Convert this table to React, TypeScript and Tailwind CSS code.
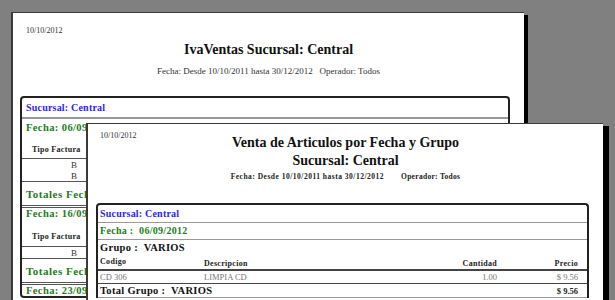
import React from 'react';

// ─── Shared styles ────────────────────────────────────────────────────────────

const serif = "font-['Liberation_Serif','Times_New_Roman',serif]";

// ─── Back page: IvaVentas ─────────────────────────────────────────────────────

const TipoFacturaHead: React.FC<{ h: string; pb: string }> = ({ h, pb }) => (
  <div className={`flex items-end ${h} ${pb} border-b border-[#555] pl-[10px]`}>
    <span className="text-[8px] leading-[10px] font-bold tracking-[0.3px] text-[#222]">Tipo Factura</span>
  </div>
);

const BRow: React.FC<{ last?: boolean }> = ({ last }) => (
  <div className={`flex items-center ${last ? 'h-[12px] border-b border-[#555]' : 'h-[11px]'}`}>
    <span className="w-[55px] text-right text-[9px] leading-[10px] text-[#333]">B</span>
  </div>
);

const GreenLine: React.FC<{ text: string; big?: boolean; h: string; double?: boolean }> = ({ text, big, h, double }) => (
  <div className={`${h} flex items-center pl-[4px] ${double ? 'border-b-[3px] border-double border-[#555]' : ''}`}>
    <span className={`${big ? 'text-[11px] tracking-[0.5px]' : 'text-[10.5px] tracking-[0.4px]'} leading-[12px] font-bold text-[#1b7d1b]`}>{text}</span>
  </div>
);

const BackPage: React.FC = () => (
  <div className={`absolute left-[11px] top-[12px] w-[513px] h-[300px] bg-white border-l-2 border-t border-[#3a3a3a] shadow-[4px_3px_0_#000] ${serif}`}>
    <div className="pt-[13px] pl-[13px] text-[8px] leading-[10px] text-[#333]">10/10/2012</div>
    <div className="mt-[6px] text-center text-[14px] leading-[16px] font-bold text-[#111]">IvaVentas Sucursal: Central</div>
    <div className="mt-[8px] text-center text-[9px] leading-[10px] text-[#333] whitespace-pre">
      {'Fecha: Desde 10/10/2011 hasta 30/12/2012   Operador: Todos'}
    </div>

    <div className="mt-[20px] ml-[7px] w-[490px] border-2 border-[#222] rounded-[4px]">
      <div className="h-[21px] flex items-center pl-[4px] border-b-2 border-[#999]">
        <span className="text-[10px] leading-[12px] font-bold tracking-[0.2px] text-[#2a2ae6]">Sucursal: Central</span>
      </div>
      <GreenLine text="Fecha: 06/09/2012" h="h-[18px]" />
      <TipoFacturaHead h="h-[22px]" pb="pb-[3px]" />
      <BRow />
      <BRow last />
      <GreenLine text="Totales Fecha" big double h="h-[26px]" />
      <GreenLine text="Fecha: 16/09/2012" h="h-[12px]" />
      <TipoFacturaHead h="h-[27px]" pb="pb-[4px]" />
      <BRow last />
      <GreenLine text="Totales Fecha" big double h="h-[26px]" />
      <GreenLine text="Fecha: 23/09/2012" h="h-[11px]" />
    </div>
  </div>
);

// ─── Front page: Venta de Articulos ───────────────────────────────────────────

const cols = 'grid grid-cols-[104px_1fr_80px_81px] pl-[2px] pr-[9px]';

const FrontPage: React.FC = () => (
  <div className={`absolute left-[86px] top-[123px] w-[517px] h-[200px] bg-white border-l-2 border-t border-[#3a3a3a] shadow-[6px_3px_0_#000] ${serif}`}>
    <div className="pt-[7px] pl-[12px] text-[8px] leading-[10px] text-[#333]">10/10/2012</div>
    <div className="-mt-[6px] text-center text-[14px] leading-[16px] font-bold text-[#111]">Venta de Articulos por Fecha y Grupo</div>
    <div className="mt-[2px] text-center text-[14px] leading-[16px] font-bold text-[#111]">Sucursal: Central</div>
    <div className="mt-[3px] flex justify-center gap-[17px] text-[7.5px] leading-[10px] font-bold text-[#222]">
      <span className="tracking-[0.5px]">Fecha: Desde 10/10/2011 hasta 30/12/2012</span>
      <span className="tracking-[0.3px]">Operador: Todos</span>
    </div>

    <div className="mt-[21px] ml-[8px] w-[493px] border-2 border-b-0 border-[#222] rounded-t-[4px]">
      <div className="h-[18px] flex items-center pl-[2px] border-b border-[#999]">
        <span className="text-[10px] leading-[12px] font-bold tracking-[0.2px] text-[#2a2ae6]">Sucursal: Central</span>
      </div>
      <div className="h-[17px] flex items-center pl-[2px] border-b border-[#999]">
        <span className="text-[10px] leading-[12px] font-bold tracking-[0.3px] text-[#1b7d1b] whitespace-pre">{'Fecha :  06/09/2012'}</span>
      </div>
      <div className="h-[16px] flex items-center pl-[2px]">
        <span className="text-[10.5px] leading-[12px] font-bold tracking-[0.3px] text-[#111] whitespace-pre">{'Grupo :  VARIOS'}</span>
      </div>
      <div className={`${cols} h-[15px] items-end border-b-2 border-[#444] text-[8px] leading-[10px] font-bold tracking-[0.3px] text-[#222]`}>
        <span className="self-start pt-[1px]">Codigo</span>
        <span>Descripcion</span>
        <span className="text-right">Cantidad</span>
        <span className="text-right">Precio</span>
      </div>
      <div className={`${cols} h-[13px] items-center border-b border-[#444] text-[8.5px] leading-[10px] text-[#777]`}>
        <span>CD 306</span>
        <span>LIMPIA CD</span>
        <span className="text-right">1.00</span>
        <span className="text-right">$ 9.56</span>
      </div>
      <div className={`${cols} h-[14px] items-center border-b border-[#999]`}>
        <span className="col-span-3 text-[10.5px] leading-[12px] font-bold tracking-[0.3px] text-[#111] whitespace-pre">{'Total Grupo :  VARIOS'}</span>
        <span className="text-right text-[8.5px] leading-[10px] font-bold text-[#222]">$ 9.56</span>
      </div>
    </div>
  </div>
);

export default function App() {
  return (
    <div className="relative w-[615px] h-[300px] overflow-hidden bg-[#808080]">
      <BackPage />
      <FrontPage />
    </div>
  );
}
